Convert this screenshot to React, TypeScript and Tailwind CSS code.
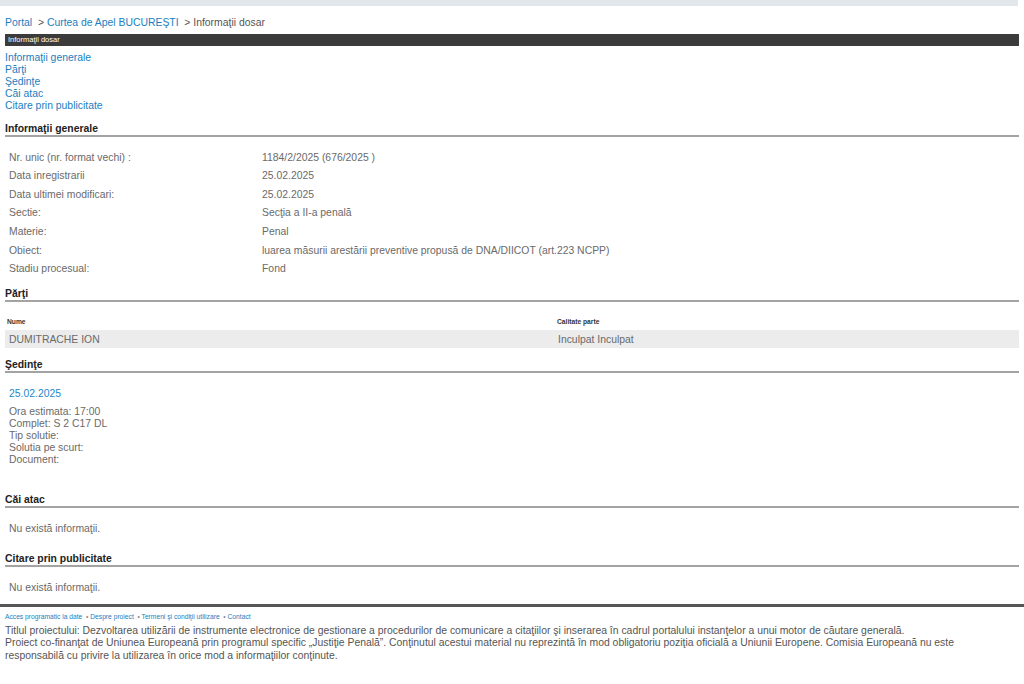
const rows: [string, string][] = [
  ["Nr. unic (nr. format vechi) :", "1184/2/2025 (676/2025 )"],
  ["Data inregistrarii", "25.02.2025"],
  ["Data ultimei modificari:", "25.02.2025"],
  ["Sectie:", "Secţia a II-a penală"],
  ["Materie:", "Penal"],
  ["Obiect:", "luarea măsurii arestării preventive propusă de DNA/DIICOT (art.223 NCPP)"],
  ["Stadiu procesual:", "Fond"],
];

const SectionTitle = ({ title, className }: { title: string; className: string }) => (
  <div className={`border-b-2 border-[#a3a3a3] text-[10.4px] leading-[13px] font-bold text-[#222] ${className}`}>
    {title}
  </div>
);

export default function App() {
  return (
    <div className="min-h-[684px] bg-white font-['Liberation_Sans',Arial,sans-serif] text-[10.4px] text-[#6a6a6a]">
      <div className="h-[6px] w-[1018px] bg-[#e2e7eb]" />

      <div className="ml-[5px] w-[1014px]">
        {/* breadcrumb */}
        <div className="mt-[10px] leading-[13px] text-[#555]">
          <a className="text-[#1a7ec0]">Portal</a>
          <span> &nbsp;&gt; </span>
          <a className="text-[#1a7ec0]">Curtea de Apel BUCUREŞTI</a>
          <span> &nbsp;&gt; Informaţii dosar</span>
        </div>

        <div className="mt-[5px] h-[12px] bg-[#3b3b3b] px-[3px] text-[7.5px] leading-[12px] text-white">
          Informaţii dosar
        </div>

        <div className="mt-[5.5px] flex flex-col leading-[12px] text-[#1a7ec0]">
          <a>Informaţii generale</a>
          <a>Părţi</a>
          <a>Şedinţe</a>
          <a>Căi atac</a>
          <a>Citare prin publicitate</a>
        </div>

        <SectionTitle title="Informaţii generale" className="mt-[10.5px]" />
        <div className="mt-[10.7px] grid grid-cols-[253px_1fr] auto-rows-[18.67px] items-center pl-[4px] leading-[13px]">
          {rows.map(([k, v]) => (
            <>
              <div key={k}>{k}</div>
              <div key={k + "v"}>{v}</div>
            </>
          ))}
        </div>

        <SectionTitle title="Părţi" className="mt-[8.5px]" />
        <div className="mt-[15px] grid grid-cols-[550px_1fr] text-[6.7px] font-bold leading-[9px] text-[#333]">
          <div className="pl-[2px]">Nume</div>
          <div className="pl-[2px]">Calitate parte</div>
        </div>
        <div className="mt-[4.5px] grid h-[18px] grid-cols-[550px_1fr] items-center bg-[#ececec] leading-[13px]">
          <div className="pl-[4px]">DUMITRACHE ION</div>
          <div className="pl-[3px]">Inculpat Inculpat</div>
        </div>

        <SectionTitle title="Şedinţe" className="mt-[9.5px]" />
        <div className="mt-[14px] pl-[4px] leading-[13px] text-[#2389c8]">25.02.2025</div>
        <div className="mt-[6.5px] flex flex-col pl-[4px] leading-[12px]">
          <span>Ora estimata: 17:00</span>
          <span>Complet: S 2 C17 DL</span>
          <span>Tip solutie:</span>
          <span>Solutia pe scurt:</span>
          <span>Document:</span>
        </div>

        <SectionTitle title="Căi atac" className="mt-[26.5px]" />
        <div className="mt-[14px] pl-[4px] leading-[13px]">Nu există informaţii.</div>

        <SectionTitle title="Citare prin publicitate" className="mt-[17px]" />
        <div className="mt-[14px] pl-[4px] leading-[13px]">Nu există informaţii.</div>
      </div>

      <div className="mt-[10.5px] h-[3px] w-full bg-[#565656]" />

      <div className="ml-[5px] w-[1014px]">
        <div className="mt-[5px] text-[6.7px] leading-[9px] text-[#1a7ec0]">
          <a>Acces programatic la date</a>
          <span className="text-[#888]"> &nbsp;• </span>
          <a>Despre proiect</a>
          <span className="text-[#888]"> &nbsp;• </span>
          <a>Termeni şi condiţii utilizare</a>
          <span className="text-[#888]"> &nbsp;• </span>
          <a>Contact</a>
        </div>
        <div className="mt-[3.25px] w-[960px] leading-[12.5px] text-[#555]">
          Titlul proiectului: Dezvoltarea utilizării de instrumente electronice de gestionare a procedurilor de comunicare a citaţiilor şi inserarea în cadrul portalului instanţelor a unui motor de căutare generală.
          <br />
          Proiect co-finanţat de Uniunea Europeană prin programul specific „Justiţie Penală”. Conţinutul acestui material nu reprezintă în mod obligatoriu poziţia oficială a Uniunii Europene. Comisia Europeană nu este responsabilă cu privire la utilizarea în orice mod a informaţiilor conţinute.
        </div>
      </div>
    </div>
  );
}
